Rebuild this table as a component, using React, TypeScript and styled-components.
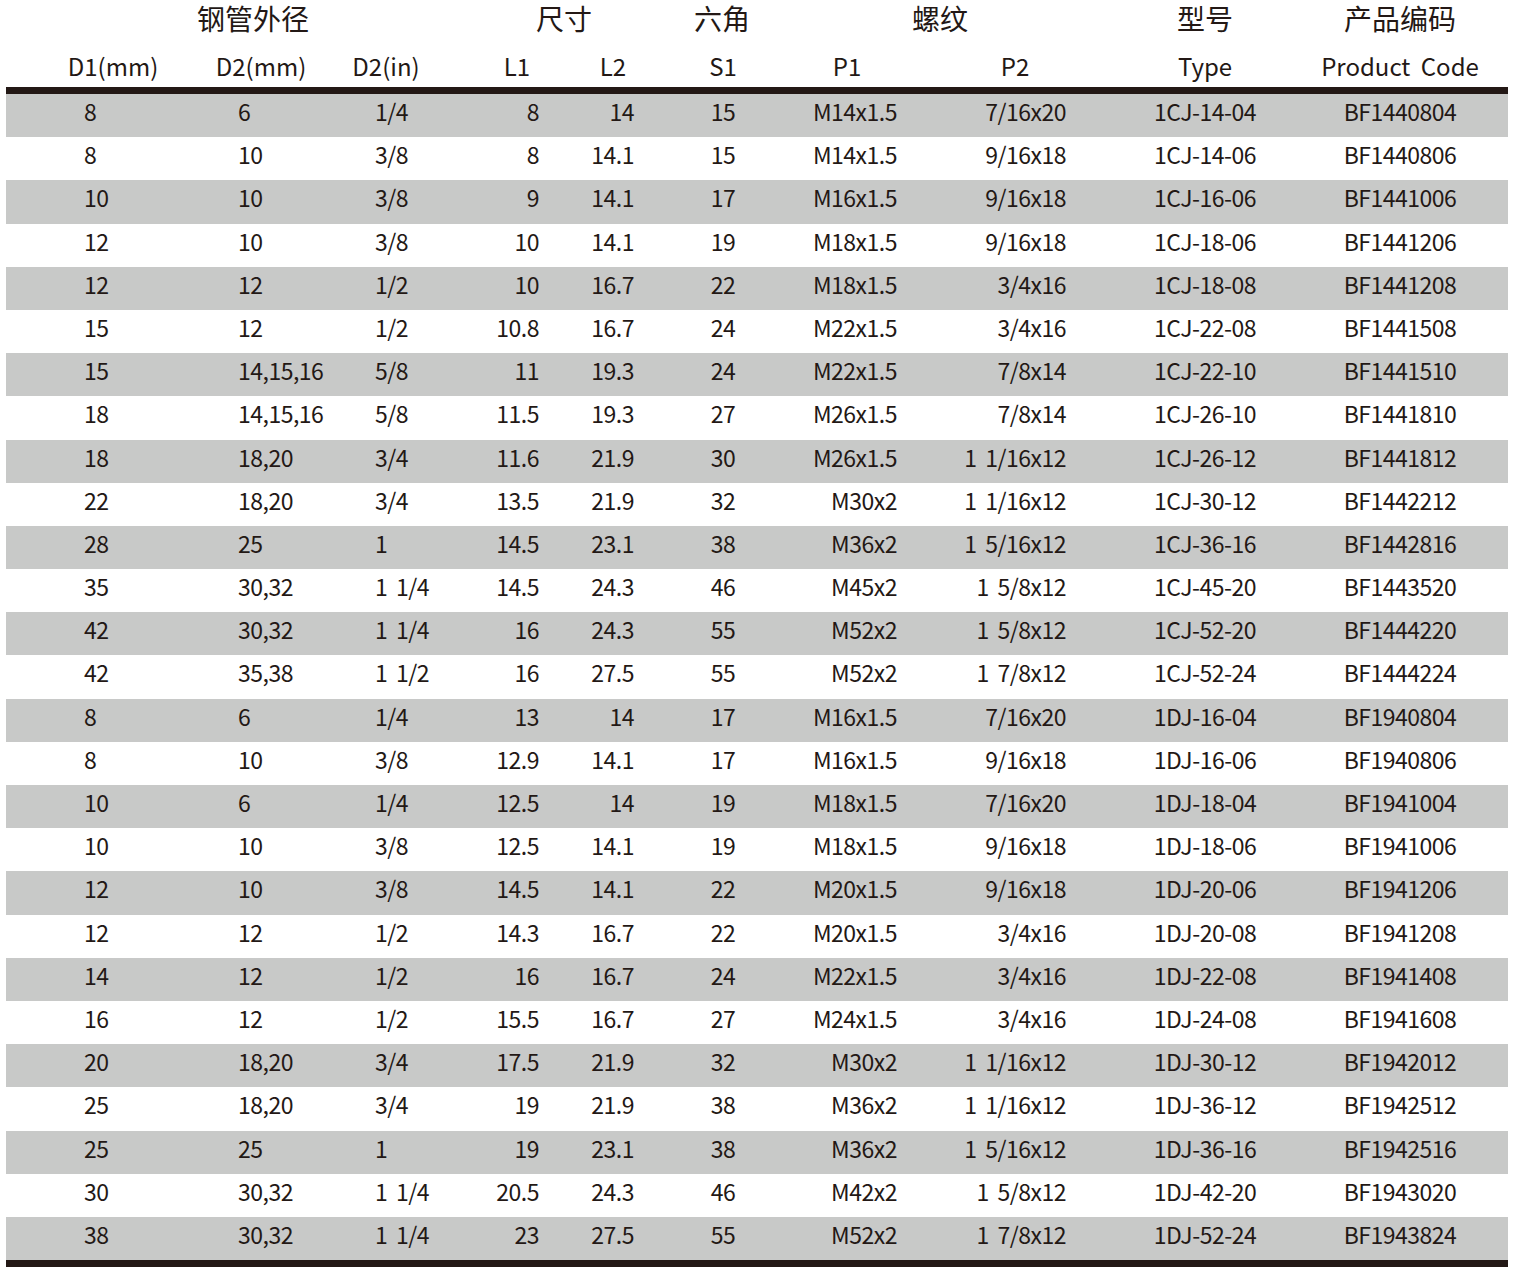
import React from 'react';
import styled, { createGlobalStyle } from 'styled-components';

const GlobalStyle = createGlobalStyle`
  html, body {
    margin: 0;
    padding: 0;
    background: #ffffff;
  }
  body {
    font-family: "Noto Sans CJK SC", "Noto Sans", sans-serif;
    color: #231815;
  }
`;

const COLS = '174px 150px 130px 100px 100px 130px 130px 190px 190px 208px';

type Align = 'left' | 'right' | 'center';

interface ColSpec {
  key: string;
  label: string;
  align: Align;
  pl: number;
  pr: number;
  hpl: number;
  hpr: number;
}

const columns: ColSpec[] = [
  { key: 'd1', label: 'D1(mm)', align: 'left', pl: 78, pr: 0, hpl: 40, hpr: 0 },
  { key: 'd2', label: 'D2(mm)', align: 'left', pl: 58, pr: 0, hpl: 12, hpr: 0 },
  { key: 'd2in', label: 'D2(in)', align: 'left', pl: 45, pr: 0, hpl: 0, hpr: 18 },
  { key: 'l1', label: 'L1', align: 'right', pl: 0, pr: 21, hpl: 14, hpr: 0 },
  { key: 'l2', label: 'L2', align: 'right', pl: 0, pr: 26, hpl: 6, hpr: 0 },
  { key: 's1', label: 'S1', align: 'center', pl: 0, pr: 4, hpl: 0, hpr: 4 },
  { key: 'p1', label: 'P1', align: 'right', pl: 0, pr: 23, hpl: 0, hpr: 16 },
  { key: 'p2', label: 'P2', align: 'right', pl: 0, pr: 44, hpl: 0, hpr: 0 },
  { key: 'type', label: 'Type', align: 'center', pl: 0, pr: 0, hpl: 0, hpr: 0 },
  { key: 'code', label: 'Product Code', align: 'center', pl: 0, pr: 8, hpl: 0, hpr: 8 },
];

const groups = [
  { label: '钢管外径', span: 3, pl: 40, pr: 0 },
  { label: '尺寸', span: 2, pl: 8, pr: 0 },
  { label: '六角', span: 1, pl: 0, pr: 6 },
  { label: '螺纹', span: 2, pl: 0, pr: 20 },
  { label: '型号', span: 1, pl: 0, pr: 0 },
  { label: '产品编码', span: 1, pl: 0, pr: 8 },
];

const data: string[][] = [
  ['8', '6', '1/4', '8', '14', '15', 'M14x1.5', '7/16x20', '1CJ-14-04', 'BF1440804'],
  ['8', '10', '3/8', '8', '14.1', '15', 'M14x1.5', '9/16x18', '1CJ-14-06', 'BF1440806'],
  ['10', '10', '3/8', '9', '14.1', '17', 'M16x1.5', '9/16x18', '1CJ-16-06', 'BF1441006'],
  ['12', '10', '3/8', '10', '14.1', '19', 'M18x1.5', '9/16x18', '1CJ-18-06', 'BF1441206'],
  ['12', '12', '1/2', '10', '16.7', '22', 'M18x1.5', '3/4x16', '1CJ-18-08', 'BF1441208'],
  ['15', '12', '1/2', '10.8', '16.7', '24', 'M22x1.5', '3/4x16', '1CJ-22-08', 'BF1441508'],
  ['15', '14,15,16', '5/8', '11', '19.3', '24', 'M22x1.5', '7/8x14', '1CJ-22-10', 'BF1441510'],
  ['18', '14,15,16', '5/8', '11.5', '19.3', '27', 'M26x1.5', '7/8x14', '1CJ-26-10', 'BF1441810'],
  ['18', '18,20', '3/4', '11.6', '21.9', '30', 'M26x1.5', '1 1/16x12', '1CJ-26-12', 'BF1441812'],
  ['22', '18,20', '3/4', '13.5', '21.9', '32', 'M30x2', '1 1/16x12', '1CJ-30-12', 'BF1442212'],
  ['28', '25', '1', '14.5', '23.1', '38', 'M36x2', '1 5/16x12', '1CJ-36-16', 'BF1442816'],
  ['35', '30,32', '1 1/4', '14.5', '24.3', '46', 'M45x2', '1 5/8x12', '1CJ-45-20', 'BF1443520'],
  ['42', '30,32', '1 1/4', '16', '24.3', '55', 'M52x2', '1 5/8x12', '1CJ-52-20', 'BF1444220'],
  ['42', '35,38', '1 1/2', '16', '27.5', '55', 'M52x2', '1 7/8x12', '1CJ-52-24', 'BF1444224'],
  ['8', '6', '1/4', '13', '14', '17', 'M16x1.5', '7/16x20', '1DJ-16-04', 'BF1940804'],
  ['8', '10', '3/8', '12.9', '14.1', '17', 'M16x1.5', '9/16x18', '1DJ-16-06', 'BF1940806'],
  ['10', '6', '1/4', '12.5', '14', '19', 'M18x1.5', '7/16x20', '1DJ-18-04', 'BF1941004'],
  ['10', '10', '3/8', '12.5', '14.1', '19', 'M18x1.5', '9/16x18', '1DJ-18-06', 'BF1941006'],
  ['12', '10', '3/8', '14.5', '14.1', '22', 'M20x1.5', '9/16x18', '1DJ-20-06', 'BF1941206'],
  ['12', '12', '1/2', '14.3', '16.7', '22', 'M20x1.5', '3/4x16', '1DJ-20-08', 'BF1941208'],
  ['14', '12', '1/2', '16', '16.7', '24', 'M22x1.5', '3/4x16', '1DJ-22-08', 'BF1941408'],
  ['16', '12', '1/2', '15.5', '16.7', '27', 'M24x1.5', '3/4x16', '1DJ-24-08', 'BF1941608'],
  ['20', '18,20', '3/4', '17.5', '21.9', '32', 'M30x2', '1 1/16x12', '1DJ-30-12', 'BF1942012'],
  ['25', '18,20', '3/4', '19', '21.9', '38', 'M36x2', '1 1/16x12', '1DJ-36-12', 'BF1942512'],
  ['25', '25', '1', '19', '23.1', '38', 'M36x2', '1 5/16x12', '1DJ-36-16', 'BF1942516'],
  ['30', '30,32', '1 1/4', '20.5', '24.3', '46', 'M42x2', '1 5/8x12', '1DJ-42-20', 'BF1943020'],
  ['38', '30,32', '1 1/4', '23', '27.5', '55', 'M52x2', '1 7/8x12', '1DJ-52-24', 'BF1943824'],
];

const Page = styled.div`
  width: 1521px;
  height: 1270px;
  padding: 0 13px 0 6px;
  box-sizing: border-box;
  background: #ffffff;
`;

const Table = styled.div`
  width: 1502px;
  display: flex;
  flex-direction: column;
`;

const GridRow = styled.div`
  display: grid;
  grid-template-columns: ${COLS};
`;

const GroupRow = styled(GridRow)`
  height: 44px;
`;

const LabelRow = styled(GridRow)`
  height: 43px;
  border-bottom: 7px solid #231815;
`;

const BodyRow = styled(GridRow)<{ $shade: boolean }>`
  height: 43.2px;
  background: ${(p) => (p.$shade ? '#c8c9c8' : '#ffffff')};
`;

const GroupCell = styled.div<{ $span: number; $pl: number; $pr: number }>`
  grid-column: span ${(p) => p.$span};
  text-align: center;
  font-size: 28px;
  line-height: 36px;
  white-space: nowrap;
  padding-left: ${(p) => p.$pl}px;
  padding-right: ${(p) => p.$pr}px;
`;

const LabelCell = styled.div<{ $pl: number; $pr: number }>`
  text-align: center;
  font-size: 24px;
  line-height: 43px;
  white-space: nowrap;
  word-spacing: 5px;
  padding-left: ${(p) => p.$pl}px;
  padding-right: ${(p) => p.$pr}px;
`;

const Cell = styled.div<{ $align: Align; $pl: number; $pr: number }>`
  text-align: ${(p) => p.$align};
  font-size: 23px;
  line-height: 35px;
  letter-spacing: -0.5px;
  word-spacing: 4px;
  white-space: pre;
  padding-left: ${(p) => p.$pl}px;
  padding-right: ${(p) => p.$pr}px;
`;

const BottomRule = styled.div`
  height: 7px;
  background: #231815;
`;

export default function App() {
  return (
    <>
      <GlobalStyle />
      <Page>
        <Table>
          <GroupRow>
            {groups.map((g) => (
              <GroupCell key={g.label} $span={g.span} $pl={g.pl} $pr={g.pr}>
                {g.label}
              </GroupCell>
            ))}
          </GroupRow>
          <LabelRow>
            {columns.map((c) => (
              <LabelCell key={c.key} $pl={c.hpl} $pr={c.hpr}>
                {c.label}
              </LabelCell>
            ))}
          </LabelRow>
          {data.map((row, i) => (
            <BodyRow key={i} $shade={i % 2 === 0}>
              {row.map((v, j) => (
                <Cell key={columns[j].key} $align={columns[j].align} $pl={columns[j].pl} $pr={columns[j].pr}>
                  {v}
                </Cell>
              ))}
            </BodyRow>
          ))}
          <BottomRule />
        </Table>
      </Page>
    </>
  );
}
